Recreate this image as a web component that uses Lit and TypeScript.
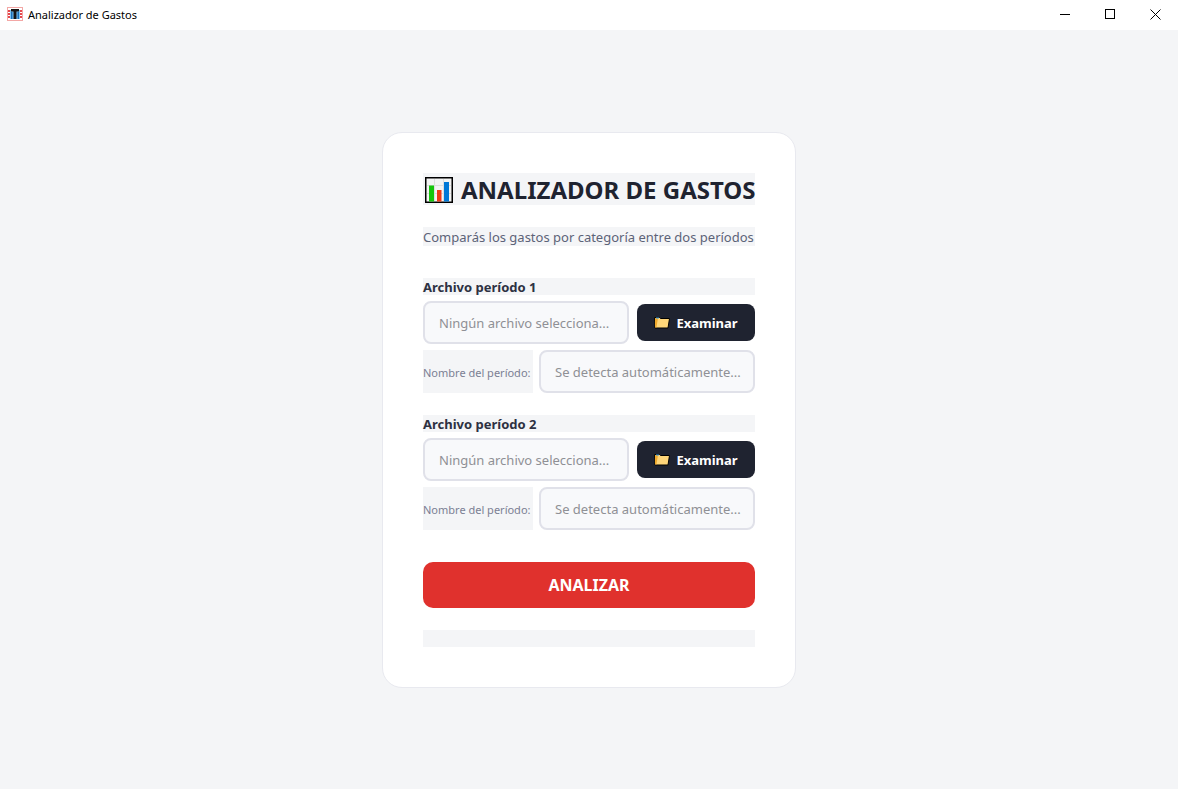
import { LitElement, html, css, svg } from "lit";
import { customElement, property } from "lit/decorators.js";

const appIcon = html`<svg width="16" height="16" viewBox="0 0 16 16" aria-hidden="true">
  <rect x="0.5" y="1.5" width="15" height="13" fill="#fff" stroke="#f3a7a5" />
  <rect x="1" y="4" width="2.5" height="2" fill="#e5484d" />
  <rect x="1" y="7" width="2.5" height="2" fill="#e5484d" />
  <rect x="1" y="10" width="2.5" height="2" fill="#e5484d" />
  <rect x="12.5" y="4" width="2.5" height="2" fill="#e5484d" />
  <rect x="12.5" y="7" width="2.5" height="2" fill="#e5484d" />
  <rect x="12.5" y="10" width="2.5" height="2" fill="#e5484d" />
  <rect x="3" y="4" width="10" height="9" fill="#7cc8f5" />
  <rect x="4" y="6" width="1.5" height="7" fill="#1c6fb8" />
  <rect x="10.5" y="6" width="1.5" height="7" fill="#1c6fb8" />
  <path d="M4 3h8v2.5H9.5V13h-3V5.500H4z" fill="#151515" />
</svg>`;

const chartIcon = html`<svg width="28" height="26" viewBox="0 0 28 26" aria-hidden="true">
  <rect x="0.75" y="0.75" width="26.5" height="24.5" fill="#f4f4f4" stroke="#000" stroke-width="1.5" />
  <path d="M2 8.5h24M2 16.5h24M9.5 2v22M18.5 2v22" stroke="#dedede" fill="none" />
  <rect x="4" y="8.500" width="5" height="16" fill="#16c60c" />
  <rect x="12" y="13" width="4.500" height="11.500" fill="#f03a17" />
  <rect x="19" y="5" width="5" height="19.500" fill="#0078d7" />
</svg>`;

const folderIcon = html`<svg width="16" height="12" viewBox="0 0 16 12" aria-hidden="true">
  <path d="M0.5 0.5h5l1 1h9l-1.5 9.500h-13z" fill="#ffd679" stroke="#000" />
  <path d="M1 1h3L2.400 10.500H1z" fill="#f0a92c" />
  <path d="M2 1h3" stroke="#3fa9f5" />
</svg>`;

@customElement("period-fields")
export class PeriodFields extends LitElement {
  @property({ type: Number }) number = 1;

  static styles = css`
    :host { display: flex; flex-direction: column; gap: 6px; }
    .heading {
      padding-top: 2px;
      background: #f4f5f7;
      color: #2d3142;
      font-size: 13px;
      font-weight: 700;
      line-height: 15px;
    }
    .row { display: flex; align-items: center; }
    .file { gap: 8px; }
    .name { gap: 6px; }
    input {
      box-sizing: border-box;
      flex: 1;
      min-width: 0;
      height: 43px;
      padding: 1px 12px 0 14px;
      border: 2px solid #e0e1e9;
      border-radius: 8px;
      background: #f8f9fb;
      color: #2d3142;
      font: inherit;
      font-size: 13px;
      text-overflow: ellipsis;
      outline: none;
    }
    input:focus { border-color: #2d3142; }
    input::placeholder { color: #8f9095; opacity: 1; }
    .caption {
      box-sizing: border-box;
      display: flex;
      align-items: center;
      align-self: stretch;
      width: 110px;
      padding-top: 2px;
      background: #f4f5f7;
      color: #7b7f94;
      font-size: 11px;
      white-space: nowrap;
    }
    button {
      display: flex;
      align-items: center;
      justify-content: center;
      gap: 6px;
      width: 118px;
      height: 37px;
      padding: 1px 0 0;
      border: 0;
      border-radius: 8px;
      background: #1f2330;
      color: #fff;
      font: inherit;
      font-size: 13px;
      font-weight: 700;
      cursor: pointer;
    }
    svg { display: block; flex: none; }
  `;

  render() {
    return html`
      <label class="heading" for="file">Archivo período ${this.number}</label>
      <div class="row file">
        <input id="file" type="text" readonly placeholder="Ningún archivo selecciona..." />
        <button type="button">${folderIcon}<span>Examinar</span></button>
      </div>
      <div class="row name">
        <label class="caption" for="name">Nombre del período:</label>
        <input id="name" type="text" placeholder="Se detecta automáticamente..." />
      </div>
    `;
  }
}

@customElement("app-root")
export class AppRoot extends LitElement {
  static styles = css`
    :host {
      display: flex;
      flex-direction: column;
      min-height: 100vh;
      background: #f4f5f7;
      font-family: "Noto Sans", "Open Sans", sans-serif;
    }
    .titlebar {
      box-sizing: border-box;
      display: flex;
      align-items: center;
      height: 30px;
      padding: 0 0 2px 7px;
      background: #fff;
      color: #000;
      font-size: 11px;
    }
    .app-name { flex: 1; padding-left: 5px; }
    .window-button {
      display: grid;
      place-items: center;
      width: 45px;
      height: 28px;
      padding: 0;
      border: 0;
      background: none;
    }
    svg { display: block; flex: none; }
    main {
      flex: 1;
      display: grid;
      place-items: center;
      padding: 24px;
    }
    .card {
      box-sizing: border-box;
      display: flex;
      flex-direction: column;
      gap: 22px;
      width: 100%;
      max-width: 414px;
      padding: 40px;
      border: 1px solid #e8e9ef;
      border-radius: 20px;
      background: #fff;
    }
    h1 {
      display: flex;
      align-items: center;
      gap: 8px;
      margin: 0;
      padding: 2px 0 0 2px;
      background: #f4f5f7;
      color: #1f2330;
      font-size: 24px;
      font-weight: 700;
      line-height: 30px;
      white-space: nowrap;
    }
    .subtitle {
      margin: 0 0 10px;
      padding-top: 2px;
      background: #f4f5f7;
      color: #5c6378;
      font-size: 13px;
      line-height: 17px;
      white-space: nowrap;
    }
    .analyze {
      height: 46px;
      margin-top: 10px;
      border: 0;
      border-radius: 10px;
      background: #e0312d;
      color: #fff;
      font: inherit;
      font-size: 16px;
      font-weight: 700;
      cursor: pointer;
    }
    .status { height: 17px; background: #f4f5f7; }
  `;

  private windowButton(label: string, shape: unknown) {
    return html`<button class="window-button" type="button" aria-label=${label}>
      <svg width="11" height="11" viewBox="0 0 11 11" fill="none" stroke="#000">${shape}</svg>
    </button>`;
  }

  render() {
    return html`
      <header class="titlebar">
        ${appIcon}
        <span class="app-name">Analizador de Gastos</span>
        ${this.windowButton("Minimizar", svg`<path d="M0 5.5h10" />`)}
        ${this.windowButton("Maximizar", svg`<rect x="0.5" y="0.5" width="9" height="9" />`)}
        ${this.windowButton("Cerrar", svg`<path d="M0.5 0.5l10 10M10.5 0.5l-10 10" />`)}
      </header>
      <main>
        <form class="card" @submit=${(e: Event) => e.preventDefault()}>
          <h1>${chartIcon}<span>ANALIZADOR DE GASTOS</span></h1>
          <p class="subtitle">Comparás los gastos por categoría entre dos períodos</p>
          <period-fields .number=${1}></period-fields>
          <period-fields .number=${2}></period-fields>
          <button class="analyze" type="submit">ANALIZAR</button>
          <div class="status" role="status"></div>
        </form>
      </main>
    `;
  }
}
